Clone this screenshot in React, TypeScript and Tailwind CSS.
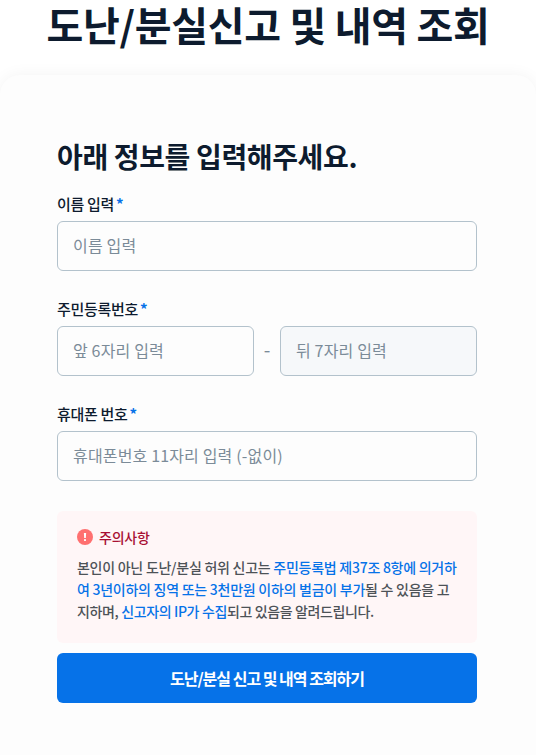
import { useState } from "react";
import type { ReactNode } from "react";

const inputClass =
  "h-[50px] w-full min-w-0 rounded-[6px] border border-[#b3c2cc] px-[15px] pb-[2px] text-[16px] tracking-[0.16px] text-[#0d1b2e] outline-none placeholder:text-[#7b8b98] placeholder:opacity-100 focus:border-[#0672e8]";

function Field({ id, label, children }: { id: string; label: string; children: ReactNode }) {
  return (
    <div className="h-[105px]">
      <label htmlFor={id} className="flex h-[28px] items-start gap-[2px] text-[15px] leading-[22px] font-medium tracking-[-0.3px] text-[#0d1b2e]">
        {label}
        <span className="font-bold text-[#0672e8]">*</span>
      </label>
      {children}
    </div>
  );
}

export default function App() {
  const [name, setName] = useState("");
  const [front, setFront] = useState("");
  const [back, setBack] = useState("");
  const [phone, setPhone] = useState("");

  return (
    <div className="h-[755px] overflow-hidden bg-white font-['Noto_Sans_CJK_KR',sans-serif] text-[#0d1b2e]">
      <h1 className="h-[75px] text-center text-[40px] leading-[48px] font-bold tracking-[-0.3px] whitespace-nowrap">
        도난/분실신고 및 내역 조회
      </h1>

      <main className="h-[720px] rounded-[20px] bg-[#fdfdfd] pt-[60px] pr-[59px] pl-[57px] shadow-[0_0_16px_rgba(0,0,0,0.05)]">
        <form onSubmit={(e) => e.preventDefault()}>
          <h2 className="h-[58px] text-[28px] leading-[42px] font-bold tracking-[-0.36px] whitespace-nowrap">
            아래 정보를 입력해주세요.
          </h2>

          <Field id="name" label="이름 입력">
            <input id="name" className={inputClass} placeholder="이름 입력" value={name} onChange={(e) => setName(e.target.value)} />
          </Field>

          <Field id="front" label="주민등록번호">
            <div className="flex items-center">
              <input id="front" className={inputClass} placeholder="앞 6자리 입력" maxLength={6} value={front} onChange={(e) => setFront(e.target.value)} />
              <span className="w-[26px] shrink-0 pb-[5px] text-center text-[19px] leading-[24px] text-[#7b8b98]">-</span>
              <input
                type="text"
                className={`${inputClass} bg-[#f6f8fa]`}
                placeholder="뒤 7자리 입력"
                maxLength={7}
                value={back}
                onChange={(e) => setBack(e.target.value)}
              />
            </div>
          </Field>

          <Field id="phone" label="휴대폰 번호">
            <input id="phone" className={inputClass} placeholder="휴대폰번호 11자리 입력 (-없이)" value={phone} onChange={(e) => setPhone(e.target.value)} />
          </Field>

          {/* Notice */}
          <section className="mt-[3px] h-[132px] rounded-[6px] bg-[#fff6f7] px-[20px] pt-[14px]">
            <div className="flex h-[24px] items-center gap-[6px]">
              <svg className="size-4" viewBox="0 0 16 16" aria-hidden>
                <circle cx="8" cy="8" r="8" fill="#ff7070" />
                <path d="M6.9 4h2.2l-.3 5H7.2z" fill="#fff" />
                <rect x="7" y="10" width="2" height="2" rx=".4" fill="#fff" />
              </svg>
              <strong className="text-[14px] leading-[22px] font-medium tracking-[-0.2px] text-[#a80f33]">주의사항</strong>
            </div>
            <p className="mt-[7px] text-[14px] leading-[22px] font-medium tracking-[-0.26px] whitespace-nowrap text-[#4d5257]">
              본인이 아닌 도난/분실 허위 신고는 <span className="text-[#0672e8]">주민등록법 제37조 8항에 의거하</span>
              <br />
              <span className="text-[#0672e8]">여 3년이하의 징역 또는 3천만원 이하의 벌금이 부가</span>될 수 있음을 고
              <br />
              <span className="tracking-[-0.37px]">
                지하며, <span className="text-[#0672e8]">신고자의 IP가 수집</span>되고 있음을 알려드립니다.
              </span>
            </p>
          </section>

          <button type="submit" className="mt-[10px] h-[50px] w-full rounded-[6px] bg-[#0672e8] text-[16px] font-bold tracking-[-1px] text-white">
            도난/분실 신고 및 내역 조회하기
          </button>
        </form>
      </main>
    </div>
  );
}
